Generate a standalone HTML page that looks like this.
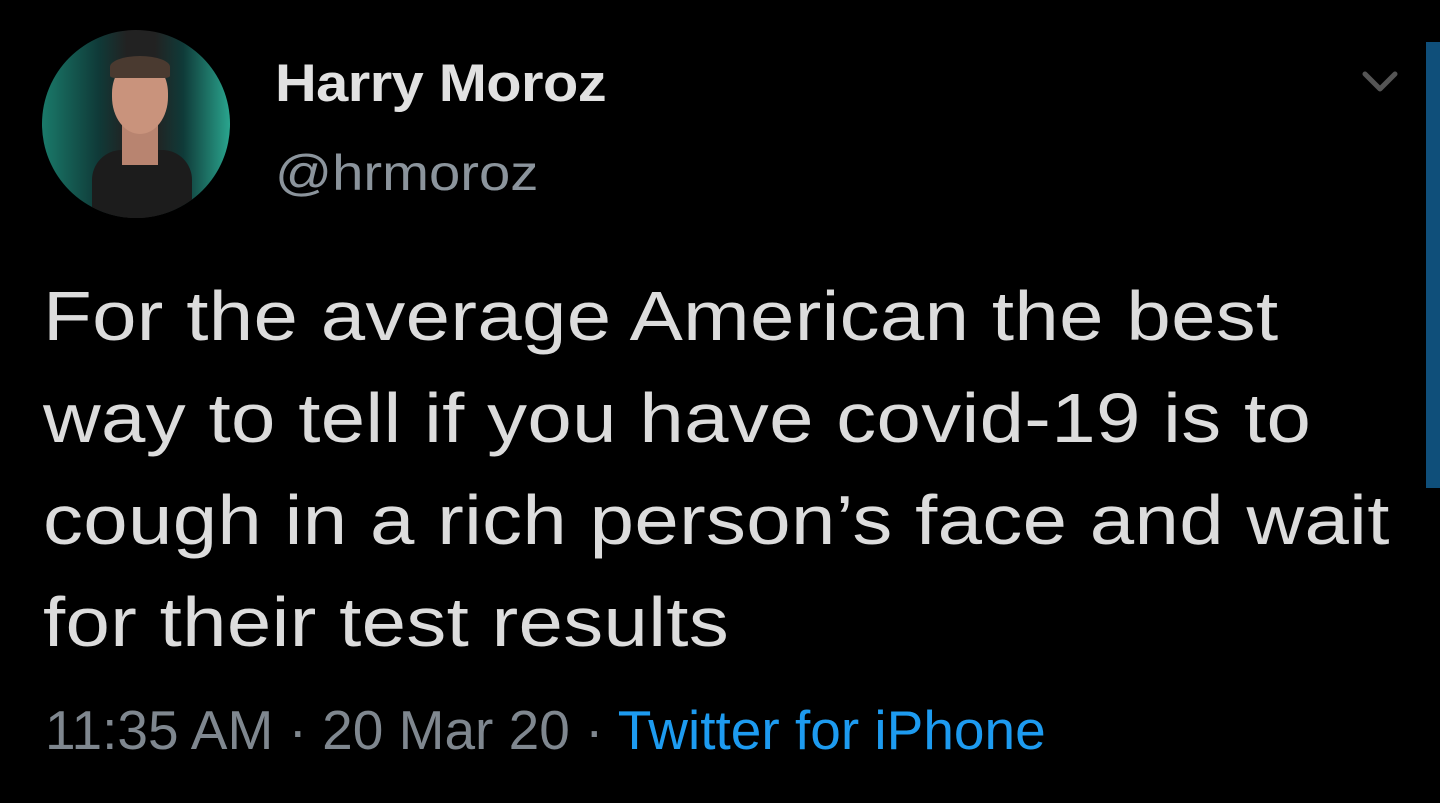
<!DOCTYPE html>
<html><head><meta charset="utf-8"><style>
html,body{margin:0;padding:0;background:#000;width:1440px;height:803px;overflow:hidden;font-family:"Liberation Sans",sans-serif;}
.av{position:absolute;left:42px;top:30px;width:188px;height:188px;border-radius:50%;overflow:hidden;background:linear-gradient(90deg,#1a7a6a 0%,#0f3a38 30%,#222 45%,#222 60%,#0f3a38 75%,#2aa58e 100%);}
.av .body{position:absolute;left:50px;top:120px;width:100px;height:80px;background:#1c1c1c;border-radius:30px 30px 0 0;}
.av .neck{position:absolute;left:80px;top:95px;width:36px;height:40px;background:#b88470;}
.av .head{position:absolute;left:70px;top:30px;width:56px;height:74px;background:#c9937c;border-radius:45% 45% 50% 50%;}
.av .hair{position:absolute;left:68px;top:26px;width:60px;height:22px;background:#4a3a30;border-radius:50% 50% 10% 10%;}
.s{transform-origin:0 0;}
.name{position:absolute;left:275px;top:53px;font-size:53px;font-weight:bold;color:#e1e1e1;letter-spacing:-0.5px;white-space:nowrap;transform:scaleX(1.09);transform-origin:0 0;}
.handle{position:absolute;left:275px;top:144px;font-size:50px;color:#8b949c;white-space:nowrap;transform:scaleX(1.125);transform-origin:0 0;}
.t{position:absolute;left:43px;font-size:70px;color:#dcdcdc;white-space:nowrap;letter-spacing:0.3px;transform:scaleX(1.14);transform-origin:0 0;}
.f{position:absolute;left:45px;top:698px;font-size:55px;color:#7f878f;white-space:nowrap;}
.f span{color:#1d9bf0;}
.sb{position:absolute;left:1426px;top:42px;width:14px;height:446px;background:#0f4f7a;}
</style></head><body>
<div class="av"><div class="body"></div><div class="neck"></div><div class="head"></div><div class="hair"></div></div>
<div class="name">Harry Moroz</div>
<div class="handle">@hrmoroz</div>
<svg style="position:absolute;left:1360px;top:68px" width="40" height="30"><path d="M5 6 L20 21 L35 6" fill="none" stroke="#555" stroke-width="5" stroke-linecap="round" stroke-linejoin="round"/></svg>
<div class="sb"></div>
<div class="t" style="top:276px">For the average American the best</div>
<div class="t" style="top:378px">way to tell if you have covid-19 is to</div>
<div class="t" style="top:480px">cough in a rich person’s face and wait</div>
<div class="t" style="top:582px">for their test results</div>
<div class="f">11:35 AM · 20 Mar 20 · <span>Twitter for iPhone</span></div>
</body></html>
